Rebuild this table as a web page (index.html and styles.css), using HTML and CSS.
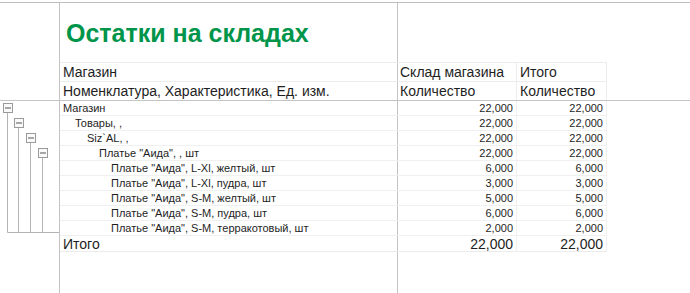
FILE: index.html
```html
<!DOCTYPE html>
<html lang="ru">
<head>
<meta charset="utf-8">
<link rel="stylesheet" href="styles.css">
</head>
<body>
<div class="sheet">
  <div class="gutter">
    <div class="gutter-top"></div>
    <svg class="tree" width="59" height="135" viewBox="0 0 59 135">
      <g stroke="#b4b4b4" stroke-width="1" fill="none">
        <line x1="7.5" y1="11" x2="7.5" y2="131.5"/>
        <line x1="18.5" y1="26" x2="18.5" y2="131.5"/>
        <line x1="30.5" y1="41" x2="30.5" y2="131.5"/>
        <line x1="42.5" y1="56" x2="42.5" y2="131.5"/>
        <line x1="7.5" y1="131.5" x2="59" y2="131.5"/>
      </g>
      <g stroke="#9a9a9a" fill="#fafafa">
        <rect x="3.5" y="2.5" width="9" height="9"/>
        <rect x="14.5" y="17.5" width="9" height="9"/>
        <rect x="26.5" y="32.5" width="9" height="9"/>
        <rect x="38.5" y="47.5" width="9" height="9"/>
      </g>
      <g stroke="#555" stroke-width="1">
        <line x1="5" y1="7" x2="11" y2="7"/>
        <line x1="16" y1="22" x2="22" y2="22"/>
        <line x1="28" y1="37" x2="34" y2="37"/>
        <line x1="40" y1="52" x2="46" y2="52"/>
      </g>
    </svg>
  </div>
  <div class="report">
    <div class="title-row">
      <h1 class="title">Остатки на складах</h1>
    </div>
    <div class="row head">
      <div class="cell">Магазин</div>
      <div class="cell">Склад магазина</div>
      <div class="cell">Итого</div>
    </div>
    <div class="row head head-last">
      <div class="cell">Номенклатура, Характеристика, Ед. изм.</div>
      <div class="cell">Количество</div>
      <div class="cell">Количество</div>
    </div>
    <div class="body">
      <div class="row data">
        <div class="cell l0">Магазин</div>
        <div class="cell num">22,000</div>
        <div class="cell num">22,000</div>
      </div>
      <div class="row data">
        <div class="cell l1">Товары, ,</div>
        <div class="cell num">22,000</div>
        <div class="cell num">22,000</div>
      </div>
      <div class="row data">
        <div class="cell l2">Siz`AL, ,</div>
        <div class="cell num">22,000</div>
        <div class="cell num">22,000</div>
      </div>
      <div class="row data">
        <div class="cell l3">Платье "Аида", , шт</div>
        <div class="cell num">22,000</div>
        <div class="cell num">22,000</div>
      </div>
      <div class="row data">
        <div class="cell l4">Платье "Аида", L-Xl, желтый, шт</div>
        <div class="cell num">6,000</div>
        <div class="cell num">6,000</div>
      </div>
      <div class="row data">
        <div class="cell l4">Платье "Аида", L-Xl, пудра, шт</div>
        <div class="cell num">3,000</div>
        <div class="cell num">3,000</div>
      </div>
      <div class="row data">
        <div class="cell l4">Платье "Аида", S-M, желтый, шт</div>
        <div class="cell num">5,000</div>
        <div class="cell num">5,000</div>
      </div>
      <div class="row data">
        <div class="cell l4">Платье "Аида", S-M, пудра, шт</div>
        <div class="cell num">6,000</div>
        <div class="cell num">6,000</div>
      </div>
      <div class="row data">
        <div class="cell l4">Платье "Аида", S-M, терракотовый, шт</div>
        <div class="cell num">2,000</div>
        <div class="cell num">2,000</div>
      </div>
      <div class="row total">
        <div class="cell">Итого</div>
        <div class="cell num">22,000</div>
        <div class="cell num">22,000</div>
      </div>
    </div>
  </div>
</div>
</body>
</html>
```

FILE: styles.css
```css
* { box-sizing: border-box; }
html, body { margin: 0; padding: 0; background: #fff; }
body {
  font-family: "Liberation Sans", Arial, sans-serif;
  color: #1e1e1e;
}
.sheet {
  margin-top: 2px;
  border-top: 1px solid #bdbdbd;
  display: flex;
  min-height: calc(100vh - 2px);
}
.gutter {
  width: 60px;
  flex: none;
  border-right: 1px solid #c4c4c4;
}
.gutter-top {
  height: 98px;
  border-bottom: 1px solid #c4c4c4;
}
.tree { display: block; }
.report {
  flex: 1;
  min-width: 0;
  background-image: linear-gradient(#c4c4c4, #c4c4c4);
  background-size: 1px 100%;
  background-position: 337px 0;
  background-repeat: no-repeat;
}
.title-row {
  height: 59px;
  padding: 15px 0 0 6px;
}
.title {
  margin: 0;
  font-size: 25px;
  font-weight: bold;
  color: #00954a;
  line-height: 30px;
}
.row {
  display: grid;
  grid-template-columns: 337px 120px 90px 1fr;
}
.cell {
  white-space: nowrap;
  overflow: hidden;
}
.head .cell {
  font-size: 14px;
  height: 19px;
  line-height: 19px;
  padding-left: 3px;
  border-top: 1px solid #ececec;
  border-right: 1px solid #ececec;
}
.head .cell:first-child { border-right: none; }
.head-last { border-bottom: 1px solid #c4c4c4; }
.data .cell {
  font-size: 11px;
  height: 15px;
  line-height: 14px;
  border-bottom: 1px solid #f0f0f0;
  border-right: 1px solid #f0f0f0;
  padding-left: 3px;
}
.data .cell:first-child { border-right: none; }
.num { text-align: right; padding-right: 3px; }
.data .cell.num { padding-left: 0; padding-right: 3px; }
.l1 { padding-left: 15px !important; }
.l2 { padding-left: 27px !important; }
.l3 { padding-left: 39px !important; }
.l4 { padding-left: 51px !important; }
.total .cell {
  font-size: 14px;
  height: 16px;
  line-height: 16px;
  padding-left: 3px;
  border-bottom: 1px solid #ececec;
  border-right: 1px solid #f0f0f0;
}
.total .cell:first-child { border-right: none; }
.total .cell.num { padding-left: 0; padding-right: 3px; }
```
